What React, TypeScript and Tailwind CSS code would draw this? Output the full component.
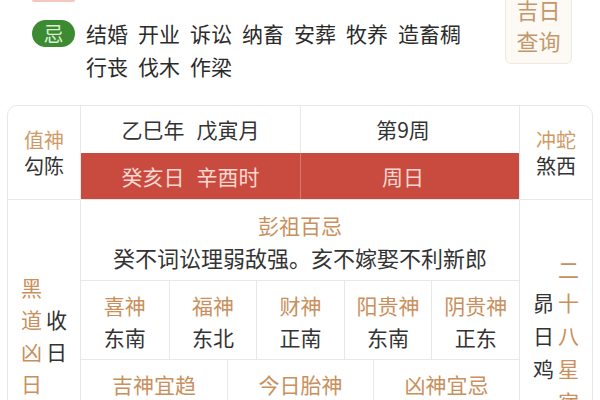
import React from 'react';

const AVOID = ['结婚', '开业', '诉讼', '纳畜', '安葬', '牧养', '造畜稠', '行丧', '伐木', '作梁'];

const GODS = [
  { name: '喜神', dir: '东南' },
  { name: '福神', dir: '东北' },
  { name: '财神', dir: '正南' },
  { name: '阳贵神', dir: '东南' },
  { name: '阴贵神', dir: '正东' },
];

const SECTIONS = ['吉神宜趋', '今日胎神', '凶神宜忌'];

function Vertical({ text, className }: { text: string; className: string }) {
  return (
    <div className={`flex flex-col items-center ${className}`}>
      {text.split('').map((c, i) => (
        <span key={i}>{c}</span>
      ))}
    </div>
  );
}

export default function App() {
  return (
    <div className="w-[600px] h-[400px] overflow-hidden bg-white font-['Noto_Sans_CJK_SC',sans-serif] text-[#333333]">
      {/* 宜忌 */}
      <div className="h-[105px] flex">
        <div className="flex-1 pl-[32px]">
          <div className="w-[43px] h-[2px] rounded-b-full bg-[#f4c6c0]" />
          <div className="mt-[15px] flex items-start">
            <span className="mt-[3px] w-[43px] h-[27px] shrink-0 rounded-full bg-[#3c8a32] text-[#d9f0d2] text-[20px] leading-none flex items-center justify-center">
              忌
            </span>
            <div className="ml-[11px] w-[400px] flex flex-wrap gap-x-[10px] text-[21px] leading-[33px] text-[#2b2b2b]">
              {AVOID.map((w) => (
                <span key={w}>{w}</span>
              ))}
            </div>
          </div>
        </div>
        <div className="mr-[28px] -mt-[14px] self-start w-[67px] py-[7px] rounded-[6px] border border-[#f0e9df] bg-[#fdfaf5] text-[#c4976a] text-[22px] leading-[31px] flex flex-col items-center">
          <span>吉日</span>
          <span>查询</span>
        </div>
      </div>

      {/* 黄历表 */}
      <div className="mx-[7px] border border-[#e8e8e8] rounded-t-[10px]">
        <div className="flex h-[94px] border-b border-[#e8e8e8] text-[21px] leading-[25px]">
          <div className="w-[73px] border-r border-[#e8e8e8] flex flex-col items-center justify-center text-[20px] leading-[26px]">
            <span className="text-[#d09a66]">值神</span>
            <span>勾陈</span>
          </div>
          <div className="flex-1 flex flex-col">
            <div className="h-[47px] grid grid-cols-2">
              <div className="flex items-center justify-center gap-[12px]">
                <span>乙巳年</span>
                <span>戊寅月</span>
              </div>
              <div className="border-l border-[#e8e8e8] flex items-center justify-center pr-[14px]">第9周</div>
            </div>
            <div className="flex-1 grid grid-cols-2 bg-[#c94b3f] text-[#f8d8d0]">
              <div className="flex items-center justify-center gap-[12px]">
                <span>癸亥日</span>
                <span>辛酉时</span>
              </div>
              <div className="border-l border-[#d9786e] flex items-center justify-center pr-[14px]">周日</div>
            </div>
          </div>
          <div className="w-[73px] border-l border-[#e8e8e8] flex flex-col items-center justify-center text-[20px] leading-[26px]">
            <span className="text-[#d09a66]">冲蛇</span>
            <span>煞西</span>
          </div>
        </div>

        <div className="flex h-[270px] text-[21px]">
          <div className="w-[73px] border-r border-[#e8e8e8] flex items-center justify-center gap-[4px] leading-[32px]">
            <Vertical text="黑道凶日" className="text-[#c98f5c]" />
            <Vertical text="收日" className="text-[#333333]" />
          </div>
          <div className="flex-1 flex flex-col leading-[32px]">
            <div className="h-[81px] border-b border-[#e8e8e8] pt-[9px] flex flex-col items-center">
              <span className="text-[#c98f5c]">彭祖百忌</span>
              <span className="text-[22px]">癸不词讼理弱敌强。亥不嫁娶不利新郎</span>
            </div>
            <div className="h-[79px] border-b border-[#e8e8e8] grid grid-cols-5">
              {GODS.map((g, i) => (
                <div
                  key={g.name}
                  className={`pt-[8px] flex flex-col items-center ${i > 0 ? 'border-l border-[#e8e8e8]' : ''}`}
                >
                  <span className="text-[#c98f5c]">{g.name}</span>
                  <span>{g.dir}</span>
                </div>
              ))}
            </div>
            <div className="flex-1 grid grid-cols-3">
              {SECTIONS.map((s, i) => (
                <div
                  key={s}
                  className={`pt-[8px] flex flex-col items-center ${i > 0 ? 'border-l border-[#e8e8e8]' : ''}`}
                >
                  <span className="text-[#c98f5c]">{s}</span>
                </div>
              ))}
            </div>
          </div>
          <div className="w-[73px] border-l border-[#e8e8e8] flex items-center justify-center gap-[4px] leading-[33px]">
            <Vertical text="昴日鸡" className="text-[#333333]" />
            <Vertical text="二十八星宿" className="text-[#c98f5c]" />
          </div>
        </div>
      </div>
    </div>
  );
}
